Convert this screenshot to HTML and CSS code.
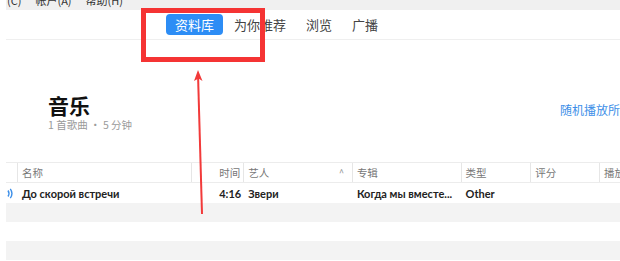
FILE: index.html
```html
<!DOCTYPE html>
<html lang="zh">
<head>
<meta charset="utf-8">
<link rel="stylesheet" href="styles.css">
</head>
<body>
<div class="page">
  <div class="menubar"><div class="menutext"><span>(C)</span><span>帐户(A)</span><span>帮助(H)</span></div></div>
  <nav class="nav">
    <span class="tab active">资料库</span>
    <span class="tab">为你推荐</span>
    <span class="tab">浏览</span>
    <span class="tab">广播</span>
  </nav>
  <section class="hero">
    <div class="titles">
      <h1 class="title">音乐</h1>
      <div class="sub">1 首歌曲 • 5 分钟</div>
    </div>
    <div class="shuffle">随机播放所有</div>
  </section>
  <div class="table">
    <div class="row head">
      <div class="c c-ic"></div>
      <div class="c c-name">名称</div>
      <div class="c c-time">时间</div>
      <div class="c c-artist"><span>艺人</span><span class="caret">^</span></div>
      <div class="c c-album">专辑</div>
      <div class="c c-type">类型</div>
      <div class="c c-rate">评分</div>
      <div class="c c-play">播放</div>
    </div>
    <div class="row data">
      <div class="c c-ic"><svg width="6" height="11" viewBox="0 0 6 11"><path d="M1 2.5 Q3 5.5 1 8.5" fill="none" stroke="#3d8fe8" stroke-width="1.4"/><path d="M3.3 0.8 Q6.6 5.5 3.3 10.2" fill="none" stroke="#3d8fe8" stroke-width="1.4"/></svg></div>
      <div class="c c-name">До скорой встречи</div>
      <div class="c c-time">4:16</div>
      <div class="c c-artist">Звери</div>
      <div class="c c-album">Когда мы вместе...</div>
      <div class="c c-type">Other</div>
      <div class="c c-rate"></div>
      <div class="c c-play"></div>
    </div>
    <div class="row stripe"></div>
    <div class="row blank"></div>
    <div class="row stripe"></div>
  </div>
  <div class="annot-box"></div>
  <svg class="annot-arrow" width="20" height="150" viewBox="0 0 20 150">
    <line x1="12" y1="146" x2="8" y2="6" stroke="#f23a3a" stroke-width="2"/>
    <path d="M8 2 L12.5 13 L8.5 10.5 L4 13 Z" fill="#f23a3a"/>
  </svg>
</div>
</body>
</html>
```

FILE: styles.css
```css
* { box-sizing: border-box; }
html, body { margin: 0; padding: 0; background: #fff; }
body { width: 620px; height: 261px; overflow: hidden; font-family: "Noto Sans CJK SC", "Noto Sans", sans-serif; }
.page { position: relative; width: 620px; height: 261px; overflow: hidden; }

.menubar { height: 10px; margin-left: 6px; background: #f0f0f0; overflow: hidden; }
.menutext { display: flex; gap: 14px; margin-top: -6px; padding-left: 1px; font-size: 11px; line-height: 13px; color: #333; }

.nav { display: flex; align-items: center; gap: 2px; height: 30px; margin-left: 6px; padding-left: 160px; border-bottom: 1px solid #efefef; }
.tab { display: block; padding: 0 9px; height: 21px; line-height: 21px; font-size: 13px; color: #444; border-radius: 4px; }
.tab.active { background: #2d8df5; color: #fff; }

.hero { display: flex; justify-content: space-between; align-items: flex-start; height: 122px; padding: 54px 0 0 48px; }
.title { margin: 0; font-size: 21px; line-height: 23px; font-weight: bold; color: #111; }
.sub { font-size: 10.5px; line-height: 12px; color: #9a9a9a; margin-top: 2px; }
.shuffle { margin-top: 8px; width: 60px; white-space: nowrap; overflow: hidden; font-size: 12px; line-height: 16px; color: #3d8fe8; }

.table { margin-left: 6px; }
.row { display: flex; height: 19px; align-items: center; font-size: 11px; }
.row.head { height: 21px; border-top: 1px solid #ececec; border-bottom: 1px solid #ececec; color: #777; font-size: 10.5px; }
.row.data { height: 20px; color: #222; font-weight: bold; font-family: "Lato", "Noto Sans", sans-serif; font-size: 11px; }
.row.stripe { background: #f3f3f3; }
.row.blank { background: #fff; }
.c { height: 100%; display: flex; align-items: center; white-space: nowrap; overflow: hidden; padding-left: 4px; }
.head .c { border-right: 1px solid #e6e6e6; }
.head .c-play { border-right: none; }
.c-ic { width: 12px; padding-left: 1px; }
.c-name { width: 175px; }
.c-time { width: 52px; justify-content: flex-end; padding-right: 3px; }
.c-artist { width: 109px; justify-content: space-between; padding-right: 8px; }
.caret { color: #888; font-size: 9px; }
.c-album { width: 109px; }
.c-type { width: 70px; }
.c-rate { width: 69px; }
.c-play { width: 20px; }

.annot-box { position: absolute; left: 141px; top: 8px; width: 124px; height: 54px; border: 5px solid #f53434; }
.annot-arrow { position: absolute; left: 190px; top: 68px; }
```
